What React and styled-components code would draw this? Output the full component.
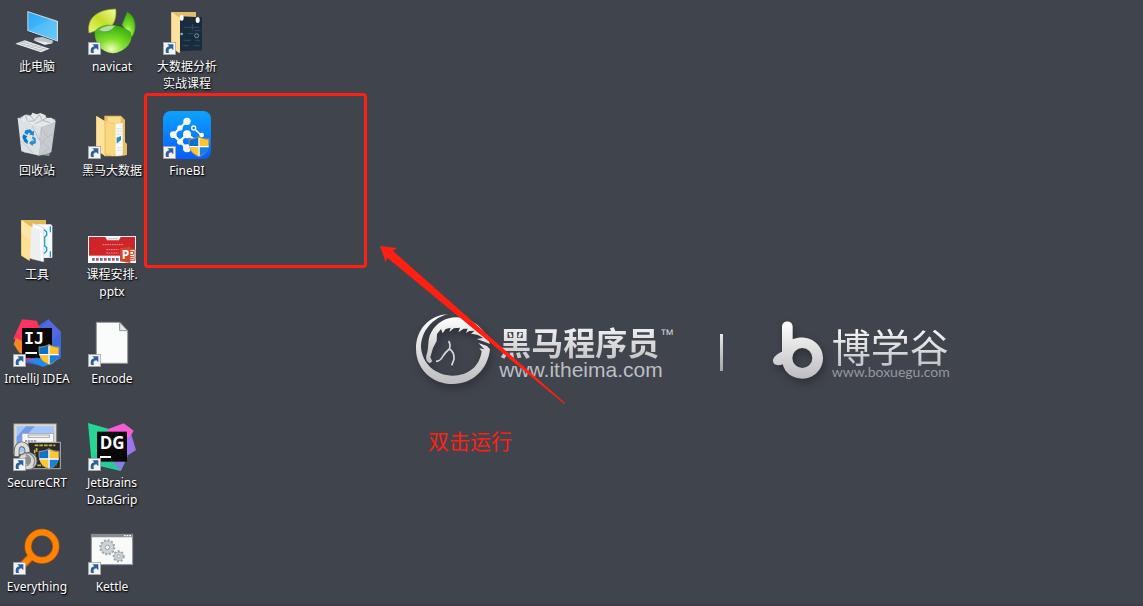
import React from "react";
import styled, { createGlobalStyle } from "styled-components";

const RED = "#ff2012";

const GlobalStyle = createGlobalStyle`
  *, *::before, *::after { box-sizing: border-box; }
  body { margin: 0; background: #40444d; }
`;

const Desktop = styled.main`
  position: relative;
  display: flex;
  align-items: flex-start;
  min-height: 100vh;
  overflow: hidden;
  background: #40444d;
  border-bottom: 2px solid #3d3e48;
  font-family: "Noto Sans", "Noto Sans CJK SC", sans-serif;
`;

const IconGrid = styled.ul`
  display: grid;
  grid-auto-flow: column;
  grid-template-rows: repeat(5, 104px) auto;
  grid-auto-columns: 75px;
  flex: none;
  margin: 0;
  padding: 7px 0 0;
  list-style: none;
`;

const Shortcut = styled.button`
  display: flex;
  flex-direction: column;
  align-items: center;
  gap: 3px;
  width: 74px;
  padding: 0;
  border: 0;
  background: none;
  color: #fff;
  font: inherit;
  cursor: default;
`;

const Glyph = styled.svg`
  display: block;
  width: 48px;
  height: 48px;
`;

const Label = styled.span`
  font-size: 12px;
  line-height: 17px;
  white-space: pre;
  text-align: center;
  text-shadow: 1px 1px 2px #000, 0 1px 1px rgba(0, 0, 0, 0.7);
`;

const Wallpaper = styled.section`
  display: flex;
  flex: 1;
  justify-content: center;
  align-items: flex-start;
  padding: 313px 3px 0 0;
`;

const Brand = styled.div`
  display: flex;
  align-items: flex-start;
  gap: ${(p) => p.$gap};
  padding-top: ${(p) => p.$drop};
`;

const BrandArt = styled.svg`
  display: block;
  width: ${(p) => p.$w};
  height: ${(p) => p.$h};
  overflow: visible;
  filter: drop-shadow(2px 4px 4px rgba(0, 0, 0, 0.3));
`;

const BrandText = styled.div`
  display: flex;
  flex-direction: column;
  padding-top: ${(p) => p.$drop};
`;

const BrandName = styled.strong`
  padding-top: 4px;
  font-family: "Liberation Sans", "Noto Sans CJK SC", sans-serif;
  font-size: ${(p) => p.$size};
  font-weight: ${(p) => p.$weight};
  line-height: 34px;
  color: transparent;
  background: linear-gradient(#f6f6f6, #c4c4c6);
  background-clip: text;
`;

const BrandSite = styled.span`
  font-family: ${(p) => p.$family}, sans-serif;
  font-size: ${(p) => p.$size};
  line-height: ${(p) => p.$line};
  color: ${(p) => p.$color};
`;

const Trademark = styled.span`
  margin: 11px 0 0 -3px;
  font: 14px/20px "Liberation Sans", sans-serif;
  color: #d0d0d2;
`;

const Divider = styled.span`
  width: 3px;
  height: 37px;
  margin: 21px 50px 0 46px;
  background: linear-gradient(#e6e6e6, #a5a6a9);
`;

const Highlight = styled.div`
  position: absolute;
  left: 144px;
  top: 93px;
  width: 223px;
  height: 175px;
  border: 3px solid ${RED};
  border-radius: 4px;
  pointer-events: none;
`;

const Arrow = styled.svg`
  position: absolute;
  left: 380px;
  top: 246px;
  width: 186px;
  height: 158px;
  pointer-events: none;
`;

const Caption = styled.p`
  position: absolute;
  left: 428px;
  top: 425px;
  margin: 0;
  font: 21px/30px "Noto Sans CJK SC", sans-serif;
  color: ${RED};
`;

const LinkBadge = ({ x, y }) => (
  <g transform={`translate(${x} ${y})`}>
    <rect x="1" y="1" width="37" height="37" fill="#f4f4f4" stroke="#9a9a9a" strokeWidth="2" />
    <path d="M9 33C6 22 10 14 19 13L13 7H31V25L25 19C17 20 15 25 18 33Z" fill="#2d5f9f" />
  </g>
);

const Shield = ({ x, y }) => (
  <g transform={`translate(${x} ${y})`}>
    <path d="M32 0C24 6 12 9 1 8C-2 36 8 56 32 65C56 56 66 36 63 8C52 9 40 6 32 0Z" fill="#8d8d84" />
    <path d="M30 5C22 9 14 12 4 12V31H30Z" fill="#0b72c9" />
    <path d="M34 5C42 9 50 12 60 12V31H34Z" fill="#ffc62e" />
    <path d="M4 35H30V60C14 54 6 45 4 35Z" fill="#ffc62e" />
    <path d="M60 35H34V60C50 54 58 45 60 35Z" fill="#1481dc" />
    <path d="M30 6H34V31H61V35H34V61H30V35H3V31H30Z" fill="#fff" />
  </g>
);

const ComputerIcon = () => (
  <Glyph viewBox="39 21 144 144">
    <defs>
      <linearGradient id="screen" x1="0" y1="0" x2="1" y2="1">
        <stop offset="0" stopColor="#29a9f7" /><stop offset="1" stopColor="#5fc4ff" />
      </linearGradient>
    </defs>
    <path d="M82 33L174 63V126L82 94Z" fill="#cfd8de" />
    <path d="M85 37L170 65V121L85 91Z" fill="url(#screen)" />
    <path d="M85 91L150 59L170 65V121Z" fill="#7bd0ff" opacity=".3" />
    <path d="M82 93L174 125L172 127L82 96Z" fill="#263846" />
    <path d="M105 113L127 111L160 122L157 130L134 134L101 121Z" fill="#bcc4ca" />
    <path d="M101 121L134 134L157 130L134 126Z" fill="#e9edf0" />
    <path d="M46 131L74 121L149 146L123 157Z" fill="#eceff1" />
    <path d="M57 131L77 124M67 135L88 128M79 139L100 132M91 143L112 136M103 147L124 140M115 151L136 144M56 129L128 153M66 125L140 149" stroke="#a9b2b8" strokeWidth="2" />
  </Glyph>
);

const TrashIcon = () => (
  <Glyph viewBox="39 33 144 144">
    <path d="M53 55L78 43L166 57L148 168L72 158Z" fill="#8e979d" />
    <path d="M60 57L74 45L92 48L97 38L111 43L121 39L137 46L138 54L154 53L165 62L149 78L120 82L85 76Z" fill="#e4e7e9" />
    <path d="M92 48L104 62L118 44L127 61L141 53M76 47L83 65L104 62M127 61L150 68M83 65L96 76L127 61" fill="none" stroke="#b1b7bb" strokeWidth="3" />
    <path d="M53 55L64 154L118 167L125 79Z" fill="#dce1e4" />
    <path d="M125 79L118 167L154 157L167 63Z" fill="#c5cbcf" />
    <path d="M128 92L143 111L126 126L147 144L118 167M143 111L162 99M97 78L118 121L125 79M64 121L99 159" fill="none" stroke="#aeb5b9" strokeWidth="2" />
    <path d="M53 55L125 79L167 63" fill="none" stroke="#f2f4f5" strokeWidth="2" />
    <path d="M76 91L90 88L98 95L102 92L101 107L87 103L92 100L86 98L82 105L73 99Z" fill="#1684d8" />
    <path d="M70 103L82 109L78 115L84 123L82 132L73 125L67 112Z" fill="#0876cc" />
    <path d="M98 109L107 115L108 129L98 134V138L87 129L98 119V125L102 121L96 115Z" fill="#288fd9" />
  </Glyph>
);

const ToolsIcon = () => (
  <Glyph viewBox="39 30 144 144">
    <path d="M64 45H138V60L92 162L64 150Z" fill="#e4b95b" />
    <path d="M106 58H153L157 64V158L108 160Z" fill="#f5f8f9" />
    <path d="M127 75H133L140 81V91L133 97H127M127 122H133L140 128V138L133 144H127M134 97V122M151 64V82M151 139V156" fill="none" stroke="#1aa0c8" strokeWidth="4" />
    <path d="M98 55L131 69V170L94 161Z" fill="#fff" stroke="#ccd0d2" strokeWidth="2" />
    <path d="M86 63L119 73L123 166L88 158Z" fill="#edf0f1" />
    <path d="M64 45L94 66L89 168L64 152Z" fill="#ffdf91" />
    <path d="M64 45L94 66L92 108L64 85Z" fill="#ffe8aa" opacity=".7" />
  </Glyph>
);

const IdeaIcon = () => (
  <Glyph viewBox="39 27 144 144">
    <path d="M114 48L145 28L183 66V145L134 169L78 158L67 108Z" fill="#3b68dc" />
    <path d="M145 28L183 66L152 97L120 58Z" fill="#5367de" />
    <path d="M66 28L110 32L120 56L86 113L40 86L48 68Z" fill="#ff3260" />
    <path d="M48 84L88 103L82 136L58 128L41 103Z" fill="#fb8424" />
    <path d="M78 130L118 144L90 157L74 148Z" fill="#c33c8f" />
    <path d="M82 150L130 140L162 159L128 171Z" fill="#218af0" />
    <rect x="66" y="54" width="90" height="90" fill="#090909" />
    <text x="72" y="102" fill="#fff" fontFamily="DejaVu Sans Mono, monospace" fontWeight="700" fontSize="50">IJ</text>
    <rect x="76" y="126" width="35" height="6" fill="#fff" />
    <LinkBadge x={39} y={132} />
    <Shield x={115} y={101} />
  </Glyph>
);

const SecureIcon = () => (
  <Glyph viewBox="39 24 144 144">
    <path d="M41 26H170V118H41Z" fill="#ddd8ca" stroke="#777" strokeWidth="3" />
    <path d="M50 34H162V110H50Z" fill="#a1c6fa" />
    <path d="M50 65L78 34H104L50 93Z" fill="#6f9ded" />
    <rect x="66" y="55" width="95" height="40" fill="#f7f7f7" stroke="#999" strokeWidth="2" />
    <path d="M84 60H148V67H84Z" fill="#fff" stroke="#777" strokeWidth="2" />
    <path d="M75 78H110" stroke="#555" strokeWidth="3" strokeDasharray="7 2" />
    <rect x="84" y="82" width="97" height="79" fill="#27292b" stroke="#b0b0b0" strokeWidth="3" />
    <path d="M104 91H166M110 99V112M104 104V146M112 151H169" stroke="#ceb13a" strokeWidth="5" strokeDasharray="11 3" />
    <path d="M50 124V107C50 82 79 82 82 105V117" fill="none" stroke="#666" strokeWidth="17" />
    <path d="M50 124V107C50 82 79 82 82 105V117" fill="none" stroke="#dedede" strokeWidth="12" />
    <ellipse cx="83" cy="138" rx="28" ry="26" fill="#d8d8d8" stroke="#666" strokeWidth="3" />
    <path d="M66 119C91 105 114 130 99 154M69 153C94 153 99 127 77 119" fill="none" stroke="#8a8a8a" strokeWidth="4" />
    <ellipse cx="83" cy="136" rx="10" ry="12" fill="#8d8d8d" />
    <LinkBadge x={39} y={129} />
    <Shield x={115} y={99} />
  </Glyph>
);

const EverythingIcon = () => (
  <Glyph viewBox="39 21 144 144">
    <path d="M94 109L55 148" stroke="#bd5b07" strokeWidth="24" />
    <circle cx="126" cy="79" r="42" fill="none" stroke="#c45a05" strokeWidth="21" />
    <path d="M98 105L55 148" stroke="#ff8506" strokeWidth="18" />
    <circle cx="126" cy="79" r="42" fill="none" stroke="#ff8303" strokeWidth="17" />
    <LinkBadge x={39} y={126} />
  </Glyph>
);

const NavicatIcon = () => (
  <Glyph viewBox="264 21 144 144">
    <defs>
      <radialGradient id="leaf" cx=".45" cy=".85" r=".85">
        <stop offset="0" stopColor="#f1fbb9" /><stop offset=".4" stopColor="#7fe02c" /><stop offset="1" stopColor="#35a909" />
      </radialGradient>
      <linearGradient id="lime" x1="0" y1="1" x2="1" y2="0">
        <stop offset="0" stopColor="#e9f77b" /><stop offset=".5" stopColor="#c3de24" /><stop offset="1" stopColor="#f5fbaa" />
      </linearGradient>
    </defs>
    <path d="M267 99C259 54 294 28 347 27C350 47 345 64 336 76L283 94Z" fill="url(#lime)" stroke="#91b91c" strokeWidth="2" />
    <path d="M382 37C410 51 410 93 395 111L366 75Z" fill="url(#leaf)" stroke="#47a61e" strokeWidth="2" />
    <path d="M284 94C300 70 355 66 392 96C403 122 378 156 338 160C302 158 283 128 284 94Z" fill="url(#leaf)" />
    <path d="M286 94C302 72 329 72 347 77C339 96 315 105 286 94Z" fill="#59b33d" />
    <path d="M298 89C311 78 329 75 343 78C333 93 315 99 298 89Z" fill="#dff0ce" opacity=".7" />
    <LinkBadge x={264} y={126} />
  </Glyph>
);

const DataFolderIcon = () => (
  <Glyph viewBox="264 33 144 144">
    <path d="M313 47H363L375 60V126L381 132V165L362 169H313Z" fill="#e6bf62" />
    <path d="M323 51H362V153L338 169L323 158Z" fill="#f9dc8a" />
    <path d="M347 73L368 68V164L347 169Z" fill="#f8f9fa" />
    <path d="M351 86H365M351 94H365M351 103H365M351 143H365M351 151H365" stroke="#cbd4d8" strokeWidth="2" />
    <path d="M350 113L363 108V120L350 131Z" fill="#268bc5" />
    <path d="M289 48L314 62L345 69V168L316 163L289 151Z" fill="#f0cf76" />
    <path d="M289 48L315 65V168L289 151Z" fill="#ffe39b" />
    <path d="M315 65L345 75V168L315 160Z" fill="#f8d982" />
    <path d="M315 65V162" stroke="#d9ad50" strokeWidth="2" />
    <LinkBadge x={264} y={138} />
  </Glyph>
);

const SlidesIcon = () => (
  <Glyph viewBox="264 30 144 144">
    <rect x="264" y="93" width="144" height="81" fill="#fff" />
    <rect x="267" y="96" width="138" height="56" fill="#cf2429" />
    <path d="M316 96H362L357 106H321Z" fill="#f1f1f1" />
    <path d="M325 101H353" stroke="#aaa" strokeWidth="2" />
    <path d="M308 119H369M319 134H356M319 144H356" stroke="#e88d8d" strokeWidth="3" strokeDasharray="5 2" />
    <g strokeWidth="8" strokeDasharray="8 16">
      <path d="M276 163H360" stroke="#5275ad" />
      <path d="M288 163H360" stroke="#ce4860" />
    </g>
    <path d="M382 133H405V166H382Z" fill="#fff" stroke="#d24726" strokeWidth="3" />
    <path d="M388 139H401V148H388ZM386 155H402M386 161H402" fill="none" stroke="#d24726" strokeWidth="3" />
    <path d="M360 130L391 125V174L360 169Z" fill="#d24726" />
    <text x="365" y="163" fill="#fff" fontFamily="Open Sans, sans-serif" fontWeight="700" fontSize="36">P</text>
  </Glyph>
);

const FileIcon = () => (
  <Glyph viewBox="264 27 144 144">
    <path d="M289 37H359L383 62V160H289Z" fill="#fafbfb" stroke="#929696" strokeWidth="3" />
    <path d="M359 37V62H383Z" fill="#e2e5e5" stroke="#929696" strokeWidth="3" />
    <LinkBadge x={264} y={132} />
  </Glyph>
);

const DataGripIcon = () => (
  <Glyph viewBox="264 24 144 144">
    <path d="M264 24L330 43L314 136L274 134Z" fill="#27d494" />
    <path d="M323 43L371 25L401 47L381 82L318 55Z" fill="#f95bd6" />
    <path d="M375 76L394 59L408 105L382 122Z" fill="#9f73ee" />
    <path d="M275 115L330 135L383 124L362 168L298 153Z" fill="#2ac99c" />
    <path d="M340 140L383 124L362 168Z" fill="#8d7beb" />
    <rect x="291" y="50" width="90" height="90" fill="#080808" />
    <text x="299" y="103" fill="#fff" fontFamily="Open Sans, sans-serif" fontWeight="700" fontSize="51">DG</text>
    <rect x="300" y="123" width="33" height="6" fill="#fff" />
    <LinkBadge x={264} y={129} />
  </Glyph>
);

const Gear = ({ x, y, r }) => (
  <g stroke="#9aa4a9">
    <circle cx={x} cy={y} r={r + 1} fill="none" strokeWidth="6" strokeDasharray="6 5" />
    <circle cx={x} cy={y} r={r - 1} fill="#cdd4d8" strokeWidth="2" />
    <circle cx={x} cy={y} r={r / 3} fill="#f8f9f9" strokeWidth="3" />
  </g>
);

const KettleIcon = () => (
  <Glyph viewBox="264 21 144 144">
    <rect x="274" y="43" width="124" height="91" fill="#f9fafa" stroke="#868b8e" strokeWidth="3" />
    <path d="M274 47H398" stroke="#868b8e" strokeWidth="9" />
    <path d="M372 47H394" stroke="#fff" strokeWidth="4" strokeDasharray="5 3" />
    <Gear x={322} y={82} r={20} />
    <Gear x={356} y={109} r={14} />
    <LinkBadge x={264} y={126} />
  </Glyph>
);

const CourseFolderIcon = () => (
  <Glyph viewBox="489 21 144 144">
    <path d="M514 36H588V54H550L538 160L514 142Z" fill="#e4bd68" />
    <path d="M540 49L606 52V151L537 154Z" fill="#182c3d" />
    <path d="M552 82H598M551 121H572M581 137H599M577 72V91M563 101H580M548 137H566M584 92H602M586 121H600" stroke="#2b5067" strokeWidth="3" />
    <circle cx="590" cy="107" r="6" fill="none" stroke="#6796ac" strokeWidth="3" />
    <circle cx="545" cy="102" r="4" fill="#67bfd5" />
    <ellipse cx="545" cy="53" rx="6" ry="9" fill="#fff" />
    <ellipse cx="593" cy="60" rx="6" ry="9" fill="#fff" />
    <path d="M514 36L540 53V159L514 144Z" fill="#fde09a" />
    <LinkBadge x={489} y={126} />
  </Glyph>
);

const FineBIIcon = () => (
  <Glyph viewBox="489 33 144 144">
    <defs>
      <linearGradient id="fine" x2="0" y2="1">
        <stop offset="0" stopColor="#0da3ff" /><stop offset="1" stopColor="#075dff" />
      </linearGradient>
    </defs>
    <rect x="489" y="33" width="144" height="144" rx="23" fill="url(#fine)" />
    <path d="M561 63L520 104L561 146M537 126L561 103L582 118" fill="none" stroke="#fff" strokeWidth="7" />
    <path d="M581 84L607 109" stroke="#fff" strokeWidth="5" />
    <g fill="#fff">
      <circle cx="561" cy="64" r="11" /><circle cx="540" cy="84" r="8" /><circle cx="520" cy="104" r="10" />
      <circle cx="540" cy="125" r="9" /><circle cx="561" cy="103" r="12" /><circle cx="561" cy="145" r="12" />
      <circle cx="605" cy="105" r="7" />
    </g>
    <circle cx="581" cy="84" r="6" fill="#0a8bff" stroke="#fff" strokeWidth="4" />
    <LinkBadge x={489} y={138} />
    <Shield x={565} y={107} />
  </Glyph>
);

const shortcuts = [
  ["此电脑", ComputerIcon],
  ["回收站", TrashIcon],
  ["工具", ToolsIcon],
  ["IntelliJ IDEA", IdeaIcon],
  ["SecureCRT", SecureIcon],
  ["Everything", EverythingIcon],
  ["navicat", NavicatIcon],
  ["黑马大数据", DataFolderIcon],
  ["课程安排.\npptx", SlidesIcon],
  ["Encode", FileIcon],
  ["JetBrains\nDataGrip", DataGripIcon],
  ["Kettle", KettleIcon],
  ["大数据分析\n实战课程", CourseFolderIcon],
  ["FineBI", FineBIIcon],
];

const Silver = ({ id }) => (
  <defs>
    <linearGradient id={id} x2="0" y2="1">
      <stop offset="0" stopColor="#fff" /><stop offset="1" stopColor="#bdbdbf" />
    </linearGradient>
  </defs>
);

const HorseLogo = () => (
  <BrandArt $w="78px" $h="72px" viewBox="18 15 234 216">
    <Silver id="silverHorse" />
    <g fill="url(#silverHorse)">
      <path d="M118 18C60 22 21 65 21 122C21 182 68 228 132 228C190 228 236 186 243 124L234 114L208 105L226 124L211 121L218 130C212 175 178 203 132 203C80 203 40 168 36 118C36 72 68 30 118 18Z" />
      <path d="M63 166C51 161 49 150 54 136C60 118 55 93 66 74C84 42 112 28 142 28C190 30 230 62 243 108L226 101L203 93L222 90C212 81 201 79 186 77L197 68L181 69L171 75L176 62L164 62L148 73L153 59L134 61L121 72L125 59L110 63L101 76L96 63L84 78L83 99L72 120L64 148L70 160Z" />
    </g>
    <path d="M119 99Q126 112 121 123Q110 132 102 144Q94 160 81 160M122 123Q136 132 135 154L128 172" fill="none" stroke="#d8d8da" strokeWidth="5" />
  </BrandArt>
);

const BoxueguLogo = () => (
  <BrandArt $w="50px" $h="58px" viewBox="220 61 150 174">
    <Silver id="silverB" />
    <path
      fill="url(#silverB)"
      fillRule="evenodd"
      d="M247 78C247 57 279 57 279 78V116C322 98 370 127 370 172C370 206 343 234 308 234C278 234 256 217 249 191C235 196 221 194 220 182C219 169 232 160 247 153ZM308 142A30 30 0 1 0 308 202A30 30 0 1 0 308 142Z"
    />
  </BrandArt>
);

export default function App() {
  return (
    <>
      <GlobalStyle />
      <Desktop>
        <IconGrid>
          {shortcuts.map(([name, Icon]) => (
            <li key={name}>
              <Shortcut type="button">
                <Icon />
                <Label>{name}</Label>
              </Shortcut>
            </li>
          ))}
        </IconGrid>
        <Wallpaper>
          <Brand $gap="6px" $drop="0">
            <HorseLogo />
            <BrandText $drop="10px">
              <BrandName $size="32px" $weight="700">黑马程序员</BrandName>
              <BrandSite $family='"Liberation Sans"' $size="21px" $line="18px" $color="#bdbec1">
                www.itheima.com
              </BrandSite>
            </BrandText>
          </Brand>
          <Trademark>™</Trademark>
          <Divider />
          <Brand $gap="9px" $drop="8px">
            <BoxueguLogo />
            <BrandText $drop="7px">
              <BrandName $size="39px" $weight="400">博学谷</BrandName>
              <BrandSite $family="Lato" $size="14px" $line="12px" $color="#96989d">
                www.boxuegu.com
              </BrandSite>
            </BrandText>
          </Brand>
        </Wallpaper>
        <Highlight />
        <Arrow viewBox="60 48 558 474">
          <path d="M60 48L112 54L98 62L616 520L613 522L82 83L77 97Z" fill={RED} />
        </Arrow>
        <Caption>双击运行</Caption>
      </Desktop>
    </>
  );
}
